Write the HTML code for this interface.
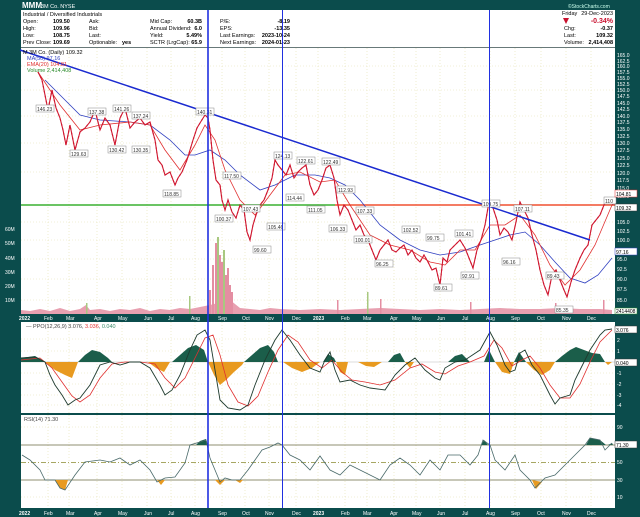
<!DOCTYPE html>
<html><head><meta charset="utf-8"><style>
html,body{margin:0;padding:0;background:#0b4c4c;}
svg{display:block;font-family:"Liberation Sans",sans-serif;}
</style></head><body>
<svg width="640" height="517" viewBox="0 0 640 517" xmlns="http://www.w3.org/2000/svg">
<rect width="640" height="517" fill="#0b4c4c"/>
<text x="22" y="8" font-size="8" font-weight="bold" fill="#fff">MMM</text>
<text x="41" y="8" font-size="5.5" fill="#fff">3M Co.  NYSE</text>
<text x="568" y="8" font-size="5" fill="#cfe">©StockCharts.com</text>
<rect x="21" y="10" width="594" height="37" fill="#fff"/>
<g font-size="5.5" fill="#000">
<text x="23" y="16">Industrial / Diversified Industrials</text>
<text x="23" y="23">Open:</text><text x="53" y="23" font-weight="bold">109.50</text>
<text x="23" y="30">High:</text><text x="53" y="30" font-weight="bold">109.96</text>
<text x="23" y="37">Low:</text><text x="53" y="37" font-weight="bold">108.75</text>
<text x="23" y="44">Prev Close:</text><text x="53" y="44" font-weight="bold">109.69</text>
<text x="89" y="23">Ask:</text><text x="89" y="30">Bid:</text><text x="89" y="37">Last:</text>
<text x="89" y="44">Optionable:</text><text x="122" y="44" font-weight="bold">yes</text>
<text x="150" y="23">Mid Cap:</text><text x="202" y="23" text-anchor="end" font-weight="bold">60.3B</text>
<text x="150" y="30">Annual Dividend:</text><text x="202" y="30" text-anchor="end" font-weight="bold">6.0</text>
<text x="150" y="37">Yield:</text><text x="202" y="37" text-anchor="end" font-weight="bold">5.49%</text>
<text x="150" y="44">SCTR (LrgCap):</text><text x="202" y="44" text-anchor="end" font-weight="bold">65.9</text>
<text x="220" y="23">P/E:</text><text x="290" y="23" text-anchor="end" font-weight="bold">-8.19</text>
<text x="220" y="30">EPS:</text><text x="290" y="30" text-anchor="end" font-weight="bold">-13.35</text>
<text x="220" y="37">Last Earnings:</text><text x="290" y="37" text-anchor="end" font-weight="bold">2023-10-24</text>
<text x="220" y="44">Next Earnings:</text><text x="290" y="44" text-anchor="end" font-weight="bold">2024-01-23</text>
<text x="562" y="15">Friday</text><text x="613" y="15" text-anchor="end">29-Dec-2023</text>
<text x="613" y="23" text-anchor="end" font-size="7" font-weight="bold" fill="#c8102e">-0.34%</text>
<path d="M563 18 L569 18 L566 24 Z" fill="#c8102e"/>
<text x="564" y="30">Chg:</text><text x="613" y="30" text-anchor="end" font-weight="bold">-0.37</text>
<text x="564" y="37">Last:</text><text x="613" y="37" text-anchor="end" font-weight="bold">109.32</text>
<text x="564" y="44">Volume:</text><text x="613" y="44" text-anchor="end" font-weight="bold">2,414,408</text>
</g>
<rect x="21" y="48" width="594" height="266" fill="#fff"/>
<rect x="21" y="322" width="594" height="91" fill="#fff"/>
<rect x="21" y="415" width="594" height="93" fill="#fff"/>
<line x1="21" y1="47.5" x2="615" y2="47.5" stroke="#888" stroke-width="0.7"/>
<g stroke="#e4e0b0" stroke-width="0.6" stroke-dasharray="1 2">
<path d="M48 48V314M69 48V314M97 48V314M122 48V314M147 48V314M171 48V314M195 48V314M222 48V314M245 48V314M269 48V314M296 48V314M318 48V314M345 48V314M367 48V314M394 48V314M416 48V314M440 48V314M465 48V314M490 48V314M515 48V314M541 48V314M566 48V314M591 48V314"/>
<path d="M48 322V413M69 322V413M97 322V413M122 322V413M147 322V413M171 322V413M195 322V413M222 322V413M245 322V413M269 322V413M296 322V413M318 322V413M345 322V413M367 322V413M394 322V413M416 322V413M440 322V413M465 322V413M490 322V413M515 322V413M541 322V413M566 322V413M591 322V413"/>
<path d="M48 415V508M69 415V508M97 415V508M122 415V508M147 415V508M171 415V508M195 415V508M222 415V508M245 415V508M269 415V508M296 415V508M318 415V508M345 415V508M367 415V508M394 415V508M416 415V508M440 415V508M465 415V508M490 415V508M515 415V508M541 415V508M566 415V508M591 415V508"/>
<path d="M21 66H615M21 90H615M21 116H615M21 143H615M21 172H615M21 222H615M21 240H615M21 259H615M21 279H615M21 300H615"/>
<path d="M21 339H615M21 351H615M21 373H615M21 384H615M21 395H615M21 405H615M21 427H615M21 497H615"/>
</g>
<path d="M21 314 L21 310 L30 311 L40 309 L50 311 L60 308 L70 311 L80 309 L86 305 L90 310 L100 309 L110 311 L120 309 L130 310 L140 308 L150 311 L160 309 L170 310 L180 308 L190 309 L200 307 L210 305 L230 300 L240 308 L250 309 L260 310 L270 308 L280 309 L300 310 L320 309 L340 310 L360 309 L380 308 L400 309 L420 310 L440 309 L460 310 L480 309 L500 308 L520 309 L540 309 L560 308 L580 309 L600 309 L612 310 L612 314 Z" fill="#e8a0b0"/>
<g fill="#e48ea2">
<rect x="209" y="290" width="2" height="24"/><rect x="212" y="265" width="2" height="49"/><rect x="215" y="243" width="2" height="71"/><rect x="217" y="237" width="2" height="77" fill="#a8c880"/><rect x="219" y="255" width="2" height="59"/><rect x="221" y="262" width="2" height="52"/><rect x="223" y="250" width="2" height="64" fill="#a8c880"/><rect x="225" y="275" width="2" height="39"/><rect x="227" y="268" width="2" height="46"/><rect x="229" y="285" width="2" height="29"/><rect x="231" y="292" width="2" height="22"/>
<rect x="189" y="296" width="1.5" height="18" fill="#a8c880"/><rect x="86" y="303" width="1.5" height="11" fill="#a8c880"/><rect x="367" y="292" width="1.5" height="22" fill="#a8c880"/><rect x="380" y="299" width="1.5" height="15"/><rect x="337" y="300" width="1.5" height="14"/><rect x="470" y="302" width="1.5" height="12"/><rect x="603" y="300" width="1.5" height="14"/><rect x="555" y="303" width="1.5" height="11"/>
</g>
<line x1="21" y1="205" x2="335" y2="205" stroke="#3ab030" stroke-width="1.6"/>
<line x1="335" y1="205" x2="615" y2="205" stroke="#f05030" stroke-width="1.6"/>
<polyline fill="none" stroke="#3040c0" stroke-width="0.8" points="45,80 60,95 80,115 100,120 130,122 150,125 170,140 185,155 195,155 210,150 225,160 240,175 260,190 275,185 295,175 315,175 330,178 345,185 360,200 380,225 400,240 420,250 440,255 460,252 480,245 495,240 510,235 525,232 540,245 555,262 570,278 585,283 598,275 612,258"/>
<polyline fill="none" stroke="#e03030" stroke-width="0.8" points="38,72 60,105 80,130 100,125 130,122 150,125 165,150 180,170 195,145 205,125 215,140 225,170 240,200 255,215 270,195 285,175 300,172 320,182 335,180 350,205 370,235 390,245 410,250 430,262 445,265 460,250 475,250 490,225 505,225 520,215 535,235 550,265 565,285 580,270 595,245 612,205"/>
<polyline id="p" fill="none" stroke="#d01830" stroke-width="1.1" points="38,72 42,80 45,95 48,110 52,90 56,108 60,118 63,130 66,145 70,125 75,150 80,132 85,128 90,122 95,110 100,130 105,118 110,125 115,145 120,118 125,108 130,128 135,122 140,118 145,125 150,122 155,140 158,160 162,165 165,175 170,172 175,185 178,178 182,172 187,160 190,150 193,140 197,128 200,123 205,115 208,118 210,130 213,160 216,180 220,185 222,200 225,210 228,200 232,212 236,218 240,205 244,210 247,232 250,240 253,225 256,215 260,205 264,200 268,190 272,178 275,160 278,165 282,170 286,175 290,165 294,178 298,172 302,168 306,165 310,185 314,195 318,190 322,180 326,168 330,165 334,178 337,200 340,215 344,205 348,210 352,220 356,230 360,225 364,235 368,240 372,250 376,260 380,250 384,245 388,240 392,250 396,252 400,248 404,245 408,255 412,250 416,258 420,262 424,255 428,262 432,270 436,268 440,285 443,258 447,262 450,250 455,245 460,240 465,248 469,258 473,268 477,250 481,240 485,225 489,202 493,208 497,220 500,235 504,228 508,232 512,240 516,222 520,202 524,210 528,218 532,235 536,250 540,270 544,285 548,295 552,275 556,270 560,280 564,290 567,297 571,282 575,270 580,258 584,250 588,245 592,225 596,220 600,215 604,205 607,200 610,198 613,205"/>
<use href="#p" stroke="#2a9a2a" stroke-dasharray="2 3"/>
<line x1="20" y1="50" x2="590" y2="240" stroke="#1a2ad0" stroke-width="1.5"/>
<g font-size="5" fill="#333">
<g fill="#fff" stroke="#888" stroke-width="0.5">
<rect x="36" y="105" width="18" height="7"/><rect x="70" y="150" width="18" height="7"/><rect x="88" y="108" width="18" height="7"/><rect x="113" y="105" width="18" height="7"/><rect x="132" y="112" width="18" height="7"/><rect x="108" y="146" width="18" height="7"/><rect x="132" y="146" width="18" height="7"/><rect x="163" y="190" width="18" height="7"/><rect x="196" y="108" width="18" height="7"/><rect x="223" y="172" width="18" height="7"/><rect x="215" y="215" width="18" height="7"/><rect x="242" y="205" width="18" height="7"/><rect x="253" y="246" width="18" height="7"/><rect x="267" y="223" width="18" height="7"/><rect x="274" y="152" width="18" height="7"/><rect x="297" y="157" width="18" height="7"/><rect x="322" y="158" width="18" height="7"/><rect x="286" y="194" width="18" height="7"/><rect x="307" y="206" width="18" height="7"/><rect x="337" y="186" width="18" height="7"/><rect x="329" y="225" width="18" height="7"/><rect x="356" y="207" width="18" height="7"/><rect x="354" y="236" width="18" height="7"/><rect x="375" y="260" width="18" height="7"/><rect x="402" y="226" width="18" height="7"/><rect x="434" y="284" width="18" height="7"/><rect x="426" y="234" width="18" height="7"/><rect x="455" y="230" width="18" height="7"/><rect x="461" y="272" width="18" height="7"/><rect x="482" y="200" width="18" height="7"/><rect x="514" y="205" width="18" height="7"/><rect x="502" y="258" width="18" height="7"/><rect x="546" y="272" width="18" height="7"/><rect x="555" y="306" width="18" height="7"/><rect x="604" y="197" width="12" height="7"/>
</g>
<text x="37" y="111">146.23</text><text x="71" y="156">129.63</text><text x="89" y="114">137.38</text><text x="114" y="111">141.26</text><text x="133" y="118">137.24</text><text x="109" y="152">130.42</text><text x="133" y="152">130.35</text><text x="164" y="196">118.85</text><text x="197" y="114">140.31</text><text x="224" y="178">117.50</text><text x="216" y="221">100.37</text><text x="243" y="211">107.43</text><text x="254" y="252">99.60</text><text x="268" y="229">105.46</text><text x="275" y="158">124.13</text><text x="298" y="163">122.61</text><text x="323" y="164">122.49</text><text x="287" y="200">114.44</text><text x="308" y="212">111.05</text><text x="338" y="192">112.93</text><text x="330" y="231">106.33</text><text x="357" y="213">107.33</text><text x="355" y="242">100.01</text><text x="376" y="266">96.25</text><text x="403" y="232">102.52</text><text x="435" y="290">89.61</text><text x="427" y="240">99.75</text><text x="456" y="236">101.41</text><text x="462" y="278">92.91</text><text x="483" y="206">109.75</text><text x="515" y="211">107.11</text><text x="503" y="264">96.16</text><text x="547" y="278">89.43</text><text x="556" y="312">85.35</text><text x="605" y="203">110</text>
</g>
<g font-size="5.5">
<text x="23" y="54" fill="#000">M 3M Co. (Daily) 109.32</text>
<text x="27" y="60" fill="#3040c0">MA(50) 97.16</text>
<text x="27" y="66" fill="#e03030">EMA(20) 104.81</text>
<text x="27" y="72" fill="#2a8a2a">Volume 2,414,408</text>
</g>
<line x1="21" y1="362" x2="615" y2="362" stroke="#bbb" stroke-width="0.5"/>
<g fill="#1b5e4a">
<path d="M21 362 L21 358 L35 356 L45 362 Z"/>
<path d="M78 362 L85 355 L92 350 L100 352 L108 358 L112 362 Z"/>
<path d="M172 362 L180 355 L188 348 L196 345 L204 350 L208 362 Z"/>
<path d="M244 362 L252 355 L260 348 L268 345 L274 352 L278 362 Z"/>
<path d="M323 362 L328 354 L334 358 L336 362 Z"/>
<path d="M388 362 L394 355 L400 353 L405 362 Z"/>
<path d="M448 362 L455 356 L462 354 L470 362 Z"/>
<path d="M484 362 L489 350 L495 362 Z"/>
<path d="M514 362 L519 352 L526 362 Z"/>
<path d="M555 362 L562 356 L570 350 L576 347 L584 350 L592 353 L600 354 L605 362 Z"/>
</g>
<g fill="#e89a20">
<path d="M45 362 L55 370 L65 375 L72 378 L78 362 Z"/>
<path d="M148 362 L156 368 L164 372 L170 362 Z"/>
<path d="M208 362 L214 375 L220 385 L226 380 L234 372 L242 365 L244 362 Z"/>
<path d="M283 362 L292 368 L302 372 L312 368 L320 362 Z"/>
<path d="M336 362 L340 372 L345 375 L348 362 Z"/>
<path d="M358 362 L366 366 L374 367 L382 362 Z"/>
<path d="M405 362 L410 368 L414 362 Z"/>
<path d="M495 362 L502 372 L510 374 L514 362 Z"/>
<path d="M526 362 L534 370 L542 375 L550 370 L555 362 Z"/>
<path d="M605 362 L608 365 L612 362 Z"/>
</g>
<polyline fill="none" stroke="#e03030" stroke-width="0.8" points="21,360 40,358 52,368 62,382 72,396 80,402 90,395 100,378 112,364 125,362 140,362 155,364 165,378 175,388 185,378 195,358 205,338 213,335 220,355 228,385 238,402 248,406 258,396 268,372 278,350 288,335 298,342 310,360 322,368 332,360 342,372 352,380 365,382 380,385 395,380 410,368 422,364 435,372 445,374 458,366 470,362 484,356 494,340 502,348 512,366 522,360 530,356 540,368 550,385 560,398 570,398 580,384 590,362 600,342 612,330"/>
<polyline fill="none" stroke="#1e3a2e" stroke-width="0.9" points="21,358 35,357 45,362 50,375 55,385 62,395 68,405 75,400 80,398 90,385 100,365 110,362 120,365 130,362 140,362 150,368 160,385 165,395 172,390 180,375 190,350 197,335 205,330 210,340 215,370 220,400 228,408 240,410 248,405 255,385 265,360 275,340 282,330 290,340 300,355 310,368 320,372 325,360 330,352 335,370 340,382 350,380 360,385 370,388 385,390 395,375 405,365 415,358 425,370 435,378 440,380 445,368 455,362 465,360 480,350 490,332 497,345 505,365 510,372 515,370 520,353 525,350 532,365 540,375 550,395 555,404 560,398 570,395 575,380 580,370 590,350 600,335 605,330 612,329"/>
<text x="26" y="328" font-size="5.5" fill="#444">— PPO(12,26,9) 3.076, <tspan fill="#e03030">3.036</tspan>, <tspan fill="#3a8a6a">0.040</tspan></text>
<g stroke-width="0.8">
<line x1="21" y1="445" x2="615" y2="445" stroke="#6a6a40"/>
<line x1="21" y1="480" x2="615" y2="480" stroke="#6a6a40"/>
<line x1="21" y1="462.5" x2="615" y2="462.5" stroke="#8a8a30" stroke-dasharray="5 2 1 2"/>
</g>
<g fill="#e89a20"><path d="M55 480 L60 488 L65 490 L68 480 Z"/><path d="M157 480 L161 485 L165 480 Z"/><path d="M215 480 L220 485 L225 480 Z"/><path d="M235 480 L240 483 L243 480 Z"/><path d="M532 480 L536 489 L542 482 Z"/></g>
<g fill="#1b5e4a"><path d="M196 445 L200 441 L206 439 L208 445 Z"/><path d="M481 445 L484 440 L488 445 Z"/><path d="M586 445 L590 438 L600 440 L606 445 Z"/><path d="M608 445 L612 443 L613 445Z"/></g>
<polyline fill="none" stroke="#4a6a6a" stroke-width="0.8" points="22,455 30,460 40,470 45,480 55,480 60,488 65,490 75,475 85,462 100,460 110,462 120,458 130,465 140,460 150,470 157,482 165,478 175,477 185,463 190,445 200,442 206,440 210,458 215,470 220,482 225,478 232,480 240,480 248,470 255,460 262,450 270,447 278,443 282,445 290,455 300,460 310,470 320,456 330,470 340,475 350,465 360,470 370,475 380,480 390,465 400,458 410,465 420,475 430,460 440,470 448,455 460,455 470,465 478,455 483,440 490,445 495,460 505,470 515,455 520,470 530,480 535,488 540,483 545,478 555,475 565,465 575,455 585,445 590,438 600,440 605,450 612,443"/>
<text x="24" y="421" font-size="5.5" fill="#444">RSI(14) 71.30</text>
<line x1="208" y1="10" x2="208" y2="508" stroke="#2030e0" stroke-width="1.6"/>
<line x1="282.5" y1="10" x2="282.5" y2="508" stroke="#2030e0" stroke-width="1"/>
<line x1="489.5" y1="10" x2="489.5" y2="508" stroke="#2030e0" stroke-width="1"/>
<g font-size="5" fill="#fff">
<text x="617" y="57">165.0</text><text x="617" y="63">162.5</text><text x="617" y="68">160.0</text><text x="617" y="74">157.5</text><text x="617" y="80">155.0</text><text x="617" y="86">152.5</text><text x="617" y="92">150.0</text><text x="617" y="98">147.5</text><text x="617" y="105">145.0</text><text x="617" y="111">142.5</text><text x="617" y="118">140.0</text><text x="617" y="124">137.5</text><text x="617" y="131">135.0</text><text x="617" y="138">132.5</text><text x="617" y="145">130.0</text><text x="617" y="152">127.5</text><text x="617" y="160">125.0</text><text x="617" y="167">122.5</text><text x="617" y="175">120.0</text><text x="617" y="182">117.5</text><text x="617" y="190">115.0</text><text x="617" y="198">112.5</text><text x="617" y="224">105.0</text><text x="617" y="233">102.5</text><text x="617" y="242">100.0</text><text x="617" y="261">95.0</text><text x="617" y="271">92.5</text><text x="617" y="281">90.0</text><text x="617" y="291">87.5</text><text x="617" y="302">85.0</text>
<text x="617" y="342">2</text><text x="617" y="353">1</text><text x="617" y="375">-1</text><text x="617" y="386">-2</text><text x="617" y="397">-3</text><text x="617" y="407">-4</text>
<text x="617" y="429">90</text><text x="617" y="464">50</text><text x="617" y="482">30</text><text x="617" y="499">10</text>
</g>
<g font-size="5">
<rect x="615" y="204" width="22" height="7" fill="#fff" stroke="#333" stroke-width="0.5"/><text x="616" y="210" fill="#000">109.32</text>
<rect x="615" y="190" width="22" height="7" fill="#fff" stroke="#e03030" stroke-width="0.5"/><text x="616" y="196" fill="#000">104.81</text>
<rect x="615" y="248" width="22" height="7" fill="#fff" stroke="#3040c0" stroke-width="0.5"/><text x="616" y="254" fill="#000">97.16</text>
<rect x="615" y="308" width="22" height="6" fill="#fff" stroke="#2a8a2a" stroke-width="0.5"/><text x="616" y="313" fill="#000">2414408</text>
<rect x="615" y="326" width="22" height="7" fill="#fff" stroke="#333" stroke-width="0.5"/><text x="616" y="332" fill="#000">3.076</text>
<rect x="615" y="359" width="22" height="7" fill="#fff" stroke="#333" stroke-width="0.5"/><text x="616" y="365" fill="#000">0.040</text>
<rect x="615" y="441" width="22" height="7" fill="#fff" stroke="#333" stroke-width="0.5"/><text x="616" y="447" fill="#000">71.30</text>
</g>
<g font-size="5" fill="#fff">
<text x="5" y="231">60M</text><text x="5" y="245">50M</text><text x="5" y="260">40M</text><text x="5" y="274">30M</text><text x="5" y="288">20M</text><text x="5" y="302">10M</text>
</g>
<g font-size="5" fill="#fff">
<text x="19" y="320" font-weight="bold">2022</text><text x="44" y="320">Feb</text><text x="66" y="320">Mar</text><text x="94" y="320">Apr</text><text x="118" y="320">May</text><text x="144" y="320">Jun</text><text x="168" y="320">Jul</text><text x="191" y="320">Aug</text><text x="218" y="320">Sep</text><text x="242" y="320">Oct</text><text x="265" y="320">Nov</text><text x="292" y="320">Dec</text><text x="313" y="320" font-weight="bold">2023</text><text x="341" y="320">Feb</text><text x="363" y="320">Mar</text><text x="390" y="320">Apr</text><text x="412" y="320">May</text><text x="437" y="320">Jun</text><text x="462" y="320">Jul</text><text x="486" y="320">Aug</text><text x="511" y="320">Sep</text><text x="537" y="320">Oct</text><text x="562" y="320">Nov</text><text x="587" y="320">Dec</text>
<text x="19" y="515" font-weight="bold">2022</text><text x="44" y="515">Feb</text><text x="66" y="515">Mar</text><text x="94" y="515">Apr</text><text x="118" y="515">May</text><text x="144" y="515">Jun</text><text x="168" y="515">Jul</text><text x="191" y="515">Aug</text><text x="218" y="515">Sep</text><text x="242" y="515">Oct</text><text x="265" y="515">Nov</text><text x="292" y="515">Dec</text><text x="313" y="515" font-weight="bold">2023</text><text x="341" y="515">Feb</text><text x="363" y="515">Mar</text><text x="390" y="515">Apr</text><text x="412" y="515">May</text><text x="437" y="515">Jun</text><text x="462" y="515">Jul</text><text x="486" y="515">Aug</text><text x="511" y="515">Sep</text><text x="537" y="515">Oct</text><text x="562" y="515">Nov</text><text x="587" y="515">Dec</text>
</g>
</svg>
</body></html>
